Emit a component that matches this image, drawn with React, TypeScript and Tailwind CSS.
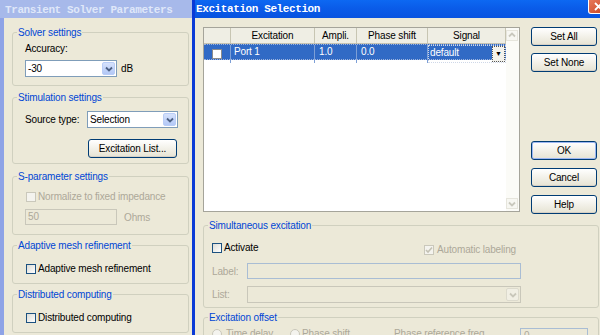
import React from "react";

const Chevron = ({ color = "#4d6185" }: { color?: string }) => (
  <svg width="8" height="6" viewBox="0 0 8 6">
    <path d="M1 1.5 L4 4.5 L7 1.5" fill="none" stroke={color} strokeWidth="1.8" />
  </svg>
);

const Tick = ({ color }: { color: string }) => (
  <svg width="8" height="8" viewBox="0 0 8 8">
    <path d="M1 4 L3 6 L7 1.5" fill="none" stroke={color} strokeWidth="1.6" />
  </svg>
);

const Check = ({ checked, disabled }: { checked?: boolean; disabled?: boolean }) => (
  <span
    className={`w-[10px] h-[10px] shrink-0 border flex items-center justify-center ${
      disabled
        ? "border-[#cac8bb] bg-[#f4f3ee]"
        : "border-[#1c5180] bg-gradient-to-br from-[#dcdcd6] to-white"
    }`}
  >
    {checked && <Tick color={disabled ? "#c3c1b3" : "#21a121"} />}
  </span>
);

const Combo = ({ value, w, disabled }: { value: string; w: string; disabled?: boolean }) => (
  <div
    className={`${w} h-[17px] border flex items-stretch ${
      disabled ? "border-[#c9c7ba] bg-[#ece9d8]" : "border-[#7f9db9] bg-white"
    }`}
  >
    <span className="flex-1 pl-[2px] leading-[15px]">{value}</span>
    <span
      className={`w-[13px] m-[1px] rounded-[2px] flex items-center justify-center ${
        disabled ? "bg-[#f1efe4] border border-[#dcdacd]" : "bg-gradient-to-b from-[#d6e2fc] to-[#b3c8f6] border border-[#b9cdf7]"
      }`}
    >
      <Chevron color={disabled ? "#c9c7ba" : "#4d6185"} />
    </span>
  </div>
);

const Btn = ({ children, w, def }: { children: React.ReactNode; w: string; def?: boolean }) => (
  <button
    className={`${w} h-[19px] shrink-0 border border-[#003c74] rounded-[3px] bg-gradient-to-b from-white to-[#e6e3d3] text-black leading-[17px] text-center ${
      def ? "shadow-[inset_0_0_0_1px_#9db7f2]" : "shadow-[inset_0_-1px_0_#d6d0c5]"
    }`}
  >
    {children}
  </button>
);

const Group = ({ title, className, children }: { title: string; className: string; children?: React.ReactNode }) => (
  <fieldset className={`border border-[#d0d0bf] rounded-[3px] min-w-0 p-0 m-0 shrink-0 ${className}`}>
    <legend className="ml-[4px] px-[1px] text-[#0046d5] leading-[11px]">{title}</legend>
    {children}
  </fieldset>
);

const LeftWindow = () => (
  <div className="w-[192px] shrink-0 flex flex-col bg-[#ece9d8]">
    <div className="h-[18px] shrink-0 bg-[#a7b9ea] pl-[5px] pt-[2px]">
      <span className="font-['Liberation_Mono',monospace] font-bold text-[11px] tracking-[-0.4px] text-[#dfe7f9] leading-[12px]">
        Transient Solver Parameters
      </span>
    </div>
    <div className="flex-1 border-l-[4px] border-[#8ea3e6] pl-[8px] pt-[9px] flex flex-col">
      <Group title="Solver settings" className="w-[177px] h-[59px]">
        <div className="pl-[12px] pt-[5px] leading-[11px]">Accuracy:</div>
        <div className="pl-[12px] mt-[6px] flex items-center gap-[4px]">
          <Combo value="-30" w="w-[92px]" />
          <span>dB</span>
        </div>
      </Group>
      <Group title="Stimulation settings" className="w-[177px] h-[72px] mt-[6px]">
        <div className="pl-[12px] mt-[8px] flex items-center">
          <span className="w-[62px]">Source type:</span>
          <Combo value="Selection" w="w-[91px]" />
        </div>
        <div className="pl-[75px] mt-[11px]">
          <Btn w="w-[89px]">Excitation List...</Btn>
        </div>
      </Group>
      <Group title="S-parameter settings" className="w-[177px] h-[64px] mt-[7px]">
        <div className="pl-[13px] mt-[9px] flex items-center gap-[2px] leading-[11px] text-[#aca899]">
          <Check disabled />
          <span>Normalize to fixed impedance</span>
        </div>
        <div className="pl-[12px] mt-[7px] flex items-center gap-[7px] text-[#aca899]">
          <span className="w-[92px] h-[16px] border border-[#c9c7ba] pl-[2px] leading-[14px]">50</span>
          <span>Ohms</span>
        </div>
      </Group>
      <Group title="Adaptive mesh refinement" className="w-[177px] h-[44px] mt-[5px]">
        <div className="pl-[13px] mt-[12px] flex items-center gap-[2px] leading-[11px]">
          <Check />
          <span>Adaptive mesh refinement</span>
        </div>
      </Group>
      <Group title="Distributed computing" className="w-[177px] h-[44px] mt-[5px]">
        <div className="pl-[13px] mt-[12px] flex items-center gap-[2px] leading-[11px]">
          <Check />
          <span>Distributed computing</span>
        </div>
      </Group>
    </div>
  </div>
);

const cols = "grid grid-cols-[27px_84px_42px_71px_78px]";

const ExcitationTable = () => (
  <div className="w-[317px] h-[185px] shrink-0 border border-[#a5a49a] bg-white flex">
    <div className="w-[302px] flex flex-col">
      <div className={`${cols} h-[16px] bg-[#efeee4] border-b border-[#c5c2b2] leading-[15px]`}>
        <span className="border-r border-[#c7c5b2]" />
        <span className="border-r border-[#c7c5b2] text-center">Excitation</span>
        <span className="border-r border-[#c7c5b2] text-center">Ampli.</span>
        <span className="border-r border-[#c7c5b2] text-center">Phase shift</span>
        <span className="border-r border-[#c7c5b2] text-center">Signal</span>
      </div>
      <div className={`${cols} h-[16px] bg-[#316ac5] text-white leading-[14px] border-y border-dotted border-[#9db3dc]`}>
        <span className="border-r border-[#7d9fd6] flex items-center justify-center">
          <span className="w-[10px] h-[10px] border border-[#8c8c8c] bg-white" />
        </span>
        <span className="border-r border-[#7d9fd6] pl-[3px]">Port 1</span>
        <span className="border-r border-[#7d9fd6] pl-[4px]">1.0</span>
        <span className="border-r border-[#7d9fd6] pl-[4px]">0.0</span>
        <span className="flex items-stretch border border-dotted border-[#cfd8e8]">
          <span className="flex-1 pl-[1px]">default</span>
          <span className="w-[13px] bg-[#f3f2ec] border border-dotted border-[#555] flex items-center justify-center text-black text-[7px]">
            ▼
          </span>
        </span>
      </div>
    </div>
    <div className="w-[13px] ml-auto bg-[#fbfbf7] flex flex-col justify-between py-[2px]">
      <span className="w-[12px] h-[11px] border border-[#e6e5dc] bg-[#f7f7f2] flex items-center justify-center rotate-180">
        <Chevron color="#c9c8bd" />
      </span>
      <span className="w-[12px] h-[11px] border border-[#e6e5dc] bg-[#f7f7f2] flex items-center justify-center">
        <Chevron color="#c9c8bd" />
      </span>
    </div>
  </div>
);

const RightWindow = () => (
  <div className="w-[418px] shrink-0 flex flex-col border-l-[3px] border-[#0a3ad6] bg-[#ece9d8]">
    <div className="h-[18px] shrink-0 bg-gradient-to-b from-[#0d68f2] via-[#0a5be8] to-[#0853e0] flex items-start pl-[1px]">
      <span className="mt-[3px] font-['Liberation_Mono',monospace] font-bold text-[11px] tracking-[-0.4px] text-white leading-[12px]">
        Excitation Selection
      </span>
      <span className="ml-auto mr-[1px] w-[21px] h-[14px] rounded-b-[3px] border border-t-0 border-white bg-gradient-to-br from-[#e7795a] to-[#c8401a] flex items-center justify-center">
        <svg width="9" height="9" viewBox="0 0 9 9">
          <path d="M1 1 L8 8 M8 1 L1 8" stroke="white" strokeWidth="1.8" />
        </svg>
      </span>
    </div>
    <div className="flex-1 pl-[8px] pt-[9px] flex flex-col">
      <div className="h-[187px] flex items-start">
        <ExcitationTable />
        <div className="ml-[11px] flex flex-col">
          <Btn w="w-[66px]">Set All</Btn>
          <div className="mt-[7px]">
            <Btn w="w-[66px]">Set None</Btn>
          </div>
          <div className="mt-[69px]">
            <Btn w="w-[66px]" def>
              OK
            </Btn>
          </div>
          <div className="mt-[8px]">
            <Btn w="w-[66px]">Cancel</Btn>
          </div>
          <div className="mt-[8px]">
            <Btn w="w-[66px]">Help</Btn>
          </div>
        </div>
      </div>
      <Group title="Simultaneous excitation" className="w-[396px] h-[88px] mt-[6px]">
        <div className="ml-[8px] w-[310px] mt-[9px] flex items-center justify-between leading-[11px]">
          <span className="flex items-center gap-[2px]">
            <Check />
            <span>Activate</span>
          </span>
          <span className="flex items-center gap-[3px] text-[#aca899] mr-[6px] mt-[4px]">
            <Check checked disabled />
            <span>Automatic labeling</span>
          </span>
        </div>
        <div className="ml-[8px] mt-[8px] flex items-center text-[#aca899]">
          <span className="w-[35px]">Label:</span>
          <span className="w-[274px] h-[16px] border border-[#a9bdd4]" />
        </div>
        <div className="ml-[8px] mt-[7px] flex items-center text-[#aca899]">
          <span className="w-[35px]">List:</span>
          <Combo value="" w="w-[274px]" disabled />
        </div>
      </Group>
      <Group title="Excitation offset" className="w-[396px] h-[40px] mt-[4px]">
        <div className="ml-[8px] mt-[5px] flex items-start text-[#aca899] leading-[12px]">
          <span className="w-[10px] h-[10px] mt-[1px] rounded-full border border-[#c9c7ba] bg-[#f4f3ee]" />
          <span className="ml-[4px] w-[64px]">Time delay</span>
          <span className="w-[10px] h-[10px] mt-[1px] rounded-full border border-[#c9c7ba] bg-[#f4f3ee]" />
          <span className="ml-[2px] w-[92px]">Phase shift</span>
          <span className="w-[126px]">Phase reference freq.</span>
          <span className="w-[68px] h-[16px] border border-[#a9bdd4] pl-[3px] leading-[14px]">0</span>
        </div>
      </Group>
    </div>
  </div>
);

export default function App() {
  return (
    <div className="w-[600px] h-[335px] overflow-hidden flex bg-[#ece9d8] text-black font-['Liberation_Sans',Arial,sans-serif] text-[10px] tracking-[-0.15px]">
      <LeftWindow />
      <RightWindow />
    </div>
  );
}
